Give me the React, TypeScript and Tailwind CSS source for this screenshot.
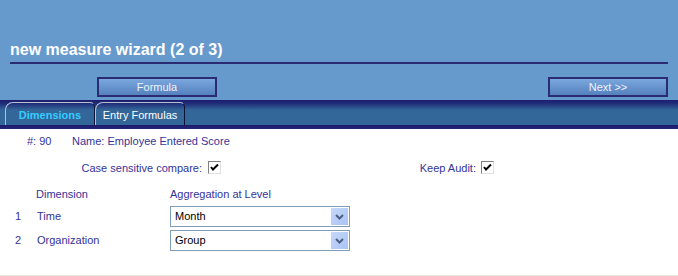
import { useState } from 'react'

function Check() {
  return (
    <span className="inline-flex h-[13px] w-[13px] items-center justify-center border border-t-[#808080] border-l-[#808080] border-r-[#e0e0e0] border-b-[#e0e0e0] bg-white">
      <svg width="9" height="9" viewBox="0 0 9 9">
        <path d="M1 4 L3 6.5 L8 1.5" stroke="#000" strokeWidth="2" fill="none" />
      </svg>
    </span>
  )
}

function Select({ value }: { value: string }) {
  return (
    <div className="flex h-[21px] w-[180px] items-center border border-[#7f9db9] bg-white pl-[4px] pr-[1px]">
      <span className="flex-1 text-[11px] text-black">{value}</span>
      <span className="flex h-[17px] w-[17px] items-center justify-center bg-[linear-gradient(135deg,#c6d7f9,#a9c4f5)]">
        <svg width="9" height="6" viewBox="0 0 9 6">
          <path d="M1 1 L4.5 4.5 L8 1" stroke="#4d6185" strokeWidth="2" fill="none" />
        </svg>
      </span>
    </div>
  )
}

function WizButton({ label }: { label: string }) {
  return (
    <button className="h-[20px] w-[120px] border-2 border-[#2b2b73] bg-[linear-gradient(#7aa7dd,#5582bd)] text-[11px] text-[#eef3fb]">
      {label}
    </button>
  )
}

export default function App() {
  const [tab, setTab] = useState('Dimensions')
  const rows = [
    { n: 1, dim: 'Time', agg: 'Month' },
    { n: 2, dim: 'Organization', agg: 'Group' },
  ]

  return (
    <div className="h-[276px] w-[678px] overflow-hidden bg-white font-['Liberation_Sans',Arial,sans-serif]">
      <header className="h-[100px] bg-[#6699cc] px-[10px] pt-[40px]">
        <h1 className="border-b-2 border-[#2b2b73] pb-[2px] text-[16px] font-bold leading-[20px] text-white">
          new measure wizard (2 of 3)
        </h1>
        <div className="mt-[13px] flex justify-between pl-[87px]">
          <WizButton label="Formula" />
          <WizButton label="Next >>" />
        </div>
      </header>

      <nav className="flex h-[25px] items-end bg-[linear-gradient(#1c1c6c_0px,#1f2a78_3px,#336699_10px,#336699)] pl-[5px]">
        {['Dimensions', 'Entry Formulas'].map((t) => (
          <button
            key={t}
            onClick={() => setTab(t)}
            className={`h-[23px] w-[90px] rounded-tl-[8px] rounded-tr-[5px] border-l border-t border-[#b8c0d0] border-r border-r-[#111133] pt-[3px] text-[11px] ${
              tab === t ? 'font-bold text-[#33ccff]' : 'text-white'
            }`}
          >
            {t}
          </button>
        ))}
      </nav>
      <div className="h-[4px] bg-[linear-gradient(#1c1c6c,#23237a)]" />

      <main className="text-[11px] text-[#333399]">
        <div className="flex pl-[27px] pt-[5px] leading-[14px]">
          <span className="w-[45px]">#: 90</span>
          <span>Name: Employee Entered Score</span>
        </div>
        <div className="mt-[13px] flex items-center leading-[14px]">
          <span className="w-[202px] text-right">Case sensitive compare:</span>
          <span className="ml-[6px]"><Check /></span>
          <span className="w-[255px] text-right">Keep Audit:</span>
          <span className="ml-[5px]"><Check /></span>
        </div>
        <div className="mt-[12px] flex leading-[14px]">
          <span className="w-[170px] pl-[36px]">Dimension</span>
          <span>Aggregation at Level</span>
        </div>
        <div className="mt-[5px] flex flex-col gap-[3px]">
          {rows.map((r) => (
            <div key={r.n} className="flex items-center">
              <span className="w-[37px] pl-[15px]">{r.n}</span>
              <span className="w-[133px]">{r.dim}</span>
              <Select value={r.agg} />
            </div>
          ))}
        </div>
      </main>
      <div className="mt-[24px] h-[2px] bg-[#ecebe0]" />
    </div>
  )
}
